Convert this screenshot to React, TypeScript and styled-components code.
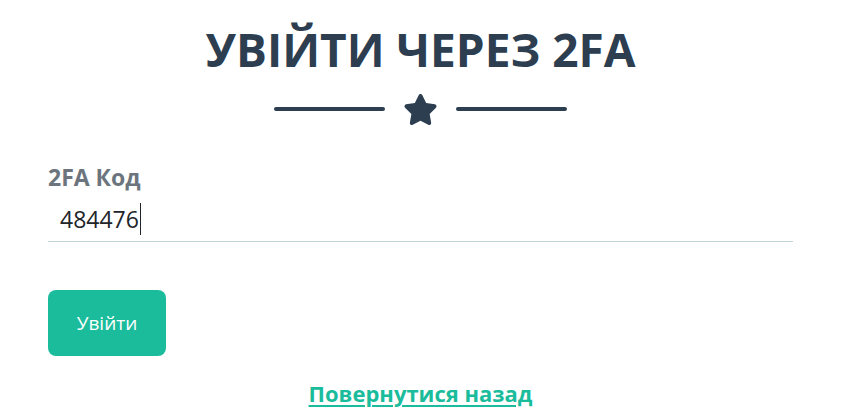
import React from 'react';
import styled, { createGlobalStyle } from 'styled-components';

const GlobalStyle = createGlobalStyle`
    html, body {
        margin: 0;
        padding: 0;
        background: #ffffff;
        font-family: "Open Sans", "Noto Sans", sans-serif;
    }
`;

const Page = styled.section`
    width: 745px;
    margin-left: 48px;
    padding-top: 18px;
`;

const Heading = styled.h2`
    margin: 0;
    text-align: center;
    text-transform: uppercase;
    font-size: 46px;
    font-weight: 700;
    line-height: 62px;
    color: #2c3e50;
`;

const Divider = styled.div`
    display: flex;
    align-items: center;
    justify-content: center;
    gap: 18px;
    margin-top: 12px;
    height: 34px;
`;

const Line = styled.span`
    width: 111px;
    height: 4px;
    border-radius: 2px;
    background: #2c3e50;
`;

const Label = styled.label`
    display: block;
    margin-top: 36px;
    font-size: 23px;
    font-weight: 700;
    color: #6c757d;
    line-height: 30px;
`;

const Field = styled.div`
    margin-top: 4px;
    border-bottom: 1px solid #bdd6d3;
    height: 45px;
    padding-left: 12px;
    display: flex;
    align-items: center;
`;

const Value = styled.span`
    font-size: 23px;
    color: #212529;
    border-right: 1px solid #212529;
    padding-right: 1px;
    line-height: 32px;
`;

const Button = styled.button`
    display: flex;
    align-items: center;
    justify-content: center;
    margin-top: 48px;
    width: 118px;
    height: 66px;
    border: none;
    border-radius: 8px;
    background: #1abc9c;
    color: #ffffff;
    font-family: inherit;
    font-size: 19px;
    cursor: pointer;
`;

const Back = styled.a`
    display: block;
    margin-top: 22px;
    text-align: center;
    font-size: 22px;
    font-weight: 700;
    color: #1abc9c;
    text-decoration: underline;
    text-decoration-thickness: 2px;
    text-underline-offset: 3px;
`;

function Star() {
    return (
        <svg width="35" height="33" viewBox="0 0 576 512">
            <path
                fill="#2c3e50"
                d="M316.9 18C311.6 7 300.4 0 288.1 0s-23.4 7-28.8 18L195 150.3 51.4 171.5c-12 1.8-22 10.2-25.7 21.7s-.7 24.2 7.9 32.7L137.8 329 113.2 474.7c-2 12 3 24.2 12.9 31.3s23 8 33.8 2.3l128.3-68.5 128.3 68.5c10.8 5.7 23.9 4.9 33.8-2.3s14.9-19.3 12.9-31.3L438.5 329 542.7 225.9c8.6-8.5 11.7-21.2 7.9-32.7s-13.7-19.9-25.7-21.7L381.2 150.3 316.9 18z"
            />
        </svg>
    );
}

export default function App() {
    return (
        <>
            <GlobalStyle />
            <Page>
                <Heading>Увійти через 2FA</Heading>
                <Divider>
                    <Line />
                    <Star />
                    <Line />
                </Divider>
                <Label>2FA Код</Label>
                <Field>
                    <Value>484476</Value>
                </Field>
                <Button>Увійти</Button>
                <Back href="#">Повернутися назад</Back>
            </Page>
        </>
    );
}
